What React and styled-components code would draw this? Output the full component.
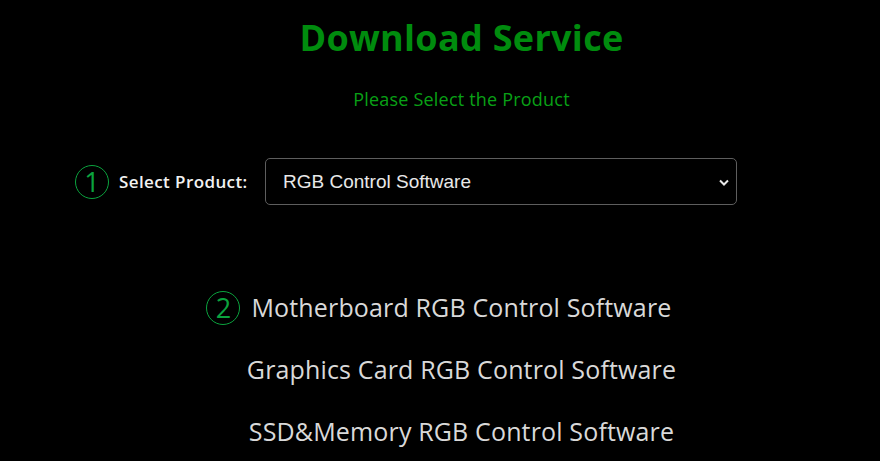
import React from 'react'
import styled, { createGlobalStyle } from 'styled-components'

const GlobalStyle = createGlobalStyle`
  html, body {
    margin: 0;
    padding: 0;
    background: #000;
  }
  body {
    font-family: "Open Sans", "Noto Sans CJK KR", sans-serif;
  }
`

const Page = styled.div`
  width: 880px;
  height: 461px;
  overflow: hidden;
  box-sizing: border-box;
  padding-left: 43px;
  background: #000;
  display: flex;
  flex-direction: column;
  align-items: center;
`

const Title = styled.h1`
  margin: 14px 0 0;
  font-size: 36px;
  line-height: 48px;
  font-weight: 700;
  color: #008c0e;
  letter-spacing: 0.3px;
`

const Subtitle = styled.p`
  margin: 25px 0 0;
  font-size: 18px;
  line-height: 24px;
  color: #09a016;
  letter-spacing: 0.2px;
`

const SelectRow = styled.div`
  margin: 47px 0 0 -111px;
  display: flex;
  align-items: center;
  width: 662px;
`

const Step = styled.span`
  flex: none;
  width: 32px;
  height: 32px;
  border: 1.6px solid #0ba33e;
  border-radius: 50%;
  display: flex;
  align-items: center;
  justify-content: center;
  color: #0ba33e;
  font-size: 27px;
  font-weight: 400;
  line-height: 1;
`

const Label = styled.label`
  margin-left: 10px;
  font-size: 17px;
  font-weight: 600;
  color: #f2f2f2;
  letter-spacing: 0.4px;
  white-space: nowrap;
`

const SelectWrap = styled.div`
  position: relative;
  margin-left: auto;
  width: 472px;
`

const Select = styled.select`
  appearance: none;
  width: 100%;
  height: 47px;
  box-sizing: border-box;
  padding: 0 40px 0 17px;
  background: #000;
  color: #e8e8e8;
  border: 1px solid #5e5e5e;
  border-radius: 5px;
  font-family: "Liberation Sans", Arial, sans-serif;
  font-size: 19px;
  outline: none;
`

const Chevron = styled.svg`
  position: absolute;
  right: 5px;
  top: 50%;
  transform: translateY(-50%);
  pointer-events: none;
`

const List = styled.ul`
  list-style: none;
  margin: 81px 0 0;
  padding: 0;
  display: flex;
  flex-direction: column;
  align-items: center;
  gap: 19px;
`

const Item = styled.li`
  position: relative;
  font-size: 25px;
  line-height: 43px;
  color: #d9d9d9;
  letter-spacing: 0.15px;
  white-space: nowrap;
`

const ItemStep = styled(Step)`
  position: absolute;
  left: -45px;
  top: 50%;
  transform: translateY(-50%);
`

const products = [
  'Motherboard RGB Control Software',
  'Graphics Card RGB Control Software',
  'SSD&Memory RGB Control Software',
]

export default function App() {
  return (
    <>
      <GlobalStyle />
      <Page>
        <Title>Download Service</Title>
        <Subtitle>Please Select the Product</Subtitle>
        <SelectRow>
          <Step>1</Step>
          <Label htmlFor="product">Select Product:</Label>
          <SelectWrap>
            <Select id="product" defaultValue="rgb">
              <option value="rgb">RGB Control Software</option>
            </Select>
            <Chevron width="16" height="16" viewBox="0 0 16 16">
              <path d="M4 6.5l4 4 4-4" fill="none" stroke="#e8e8e8" strokeWidth="2" />
            </Chevron>
          </SelectWrap>
        </SelectRow>
        <List>
          {products.map((p, i) => (
            <Item key={p}>
              {i === 0 && <ItemStep>2</ItemStep>}
              {p}
            </Item>
          ))}
        </List>
      </Page>
    </>
  )
}
